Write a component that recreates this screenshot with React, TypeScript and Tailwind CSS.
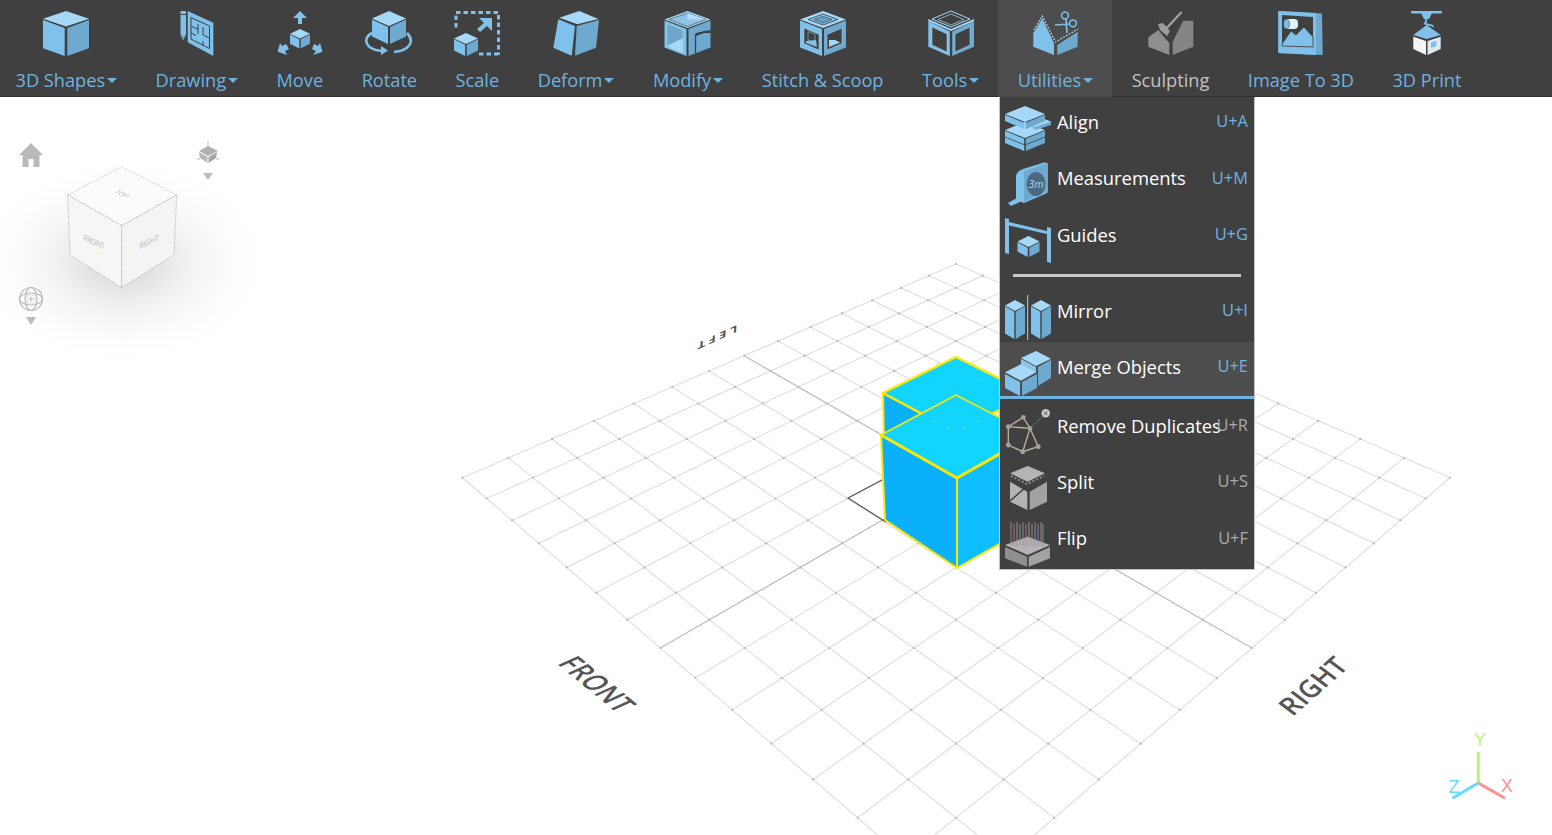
import type { ReactNode } from 'react';

const T = '#a6d8f7';
const L = '#7fc1ea';
const R = '#6ea9d0';
const D = '#404040';

type Pt = [number, number];
const pts = (p: number[]) => p.join(' ');

// isometric box: apex at (cx,y), half width hw, half height hh, side depth d
function Box({ cx, y, hw, hh, d, g = 1, c = [T, L, R] }: { cx: number; y: number; hw: number; hh: number; d: number; g?: number; c?: string[] }) {
  return (
    <>
      <polygon fill={c[0]} points={pts([cx, y, cx + hw, y + hh, cx, y + 2 * hh, cx - hw, y + hh])} />
      <polygon fill={c[1]} points={pts([cx - hw, y + hh + g, cx - g, y + 2 * hh + g, cx - g, y + 2 * hh + d, cx - hw, y + hh + d])} />
      <polygon fill={c[2]} points={pts([cx + hw, y + hh + g, cx + g, y + 2 * hh + g, cx + g, y + 2 * hh + d, cx + hw, y + hh + d])} />
    </>
  );
}

function Ico({ x, y = 8, s = 50, children }: { x: number; y?: number; s?: number; children: ReactNode }) {
  return (
    <svg width={s} height={s} viewBox={`${x} ${y} ${s} ${s}`} className="block shrink-0">
      {children}
    </svg>
  );
}

const headerIcons: Record<string, ReactNode> = {
  shapes: (
    <Ico x={41}>
      <Box cx={66} y={11} hw={23} hh={7.8} d={29.5} g={1.3} />
    </Ico>
  ),
  drawing: (
    <Ico x={172}>
      <rect x={180.5} y={11} width={5.5} height={24} rx={1} fill={L} />
      <polygon points="180.5,35 186,35 183.2,40.5" fill={R} />
      <rect x={180.5} y={14} width={5.5} height={1} fill={D} />
      <polygon points="187.7,11 213.3,22.7 213.3,56 187.7,42.3" fill={L} />
      <path d="M191 17.5 L209.5 26 V48.5 L191 39 Z M191 26 L198 29.5 V24 M198 29.5 V34 M203 27 V35 L209.5 38 M191 33 L196 35.5 M203 41 V46" fill="none" stroke={D} strokeWidth={1} />
    </Ico>
  ),
  move: (
    <Ico x={275}>
      <polygon points="300,11 307,18 302,18 302,24 298,24 298,18 293,18" fill={L} />
      <Box cx={300} y={29} hw={10} hh={4.8} d={10} g={0.7} />
      <polygon points="277.7,51.7 280,43 282,46 286,44 289,49 285,51 287,55" fill={L} />
      <polygon points="322.5,51.7 320,43 318,46 314,44 312,49 316,51 313,55" fill={L} />
    </Ico>
  ),
  rotate: (
    <Ico x={364}>
      <path d="M372 33 C363 38 365 47 376 50 L382 51 M394 52 C408 51 416 42 407 33" fill="none" stroke={L} strokeWidth={2.6} />
      <polygon points="388,50.5 381,46 381,55" fill={L} />
      <Box cx={389} y={11} hw={17} hh={7.5} d={18} g={1} />
    </Ico>
  ),
  scale: (
    <Ico x={452}>
      <path d="M456 12.5 H498.5 V55" fill="none" stroke={L} strokeWidth={3} strokeDasharray="4.5 3" />
      <path d="M456 15.5 V30 M479 54 H498" fill="none" stroke={L} strokeWidth={3} strokeDasharray="4.5 3" />
      <polygon points="492,18 492,31 487,26 480,32 477,29 484,23 479,18" fill={L} />
      <Box cx={466} y={33} hw={12} hh={5.5} d={12} g={0.8} />
    </Ico>
  ),
  deform: (
    <Ico x={551}>
      <polygon points="579.3,11 598.3,19 577.3,24.3 559.3,17.7" fill={T} />
      <polygon points="558.3,19.3 575,26 571.7,55.7 553.3,47.7" fill={L} />
      <polygon points="576.7,26 599,20 596,47.7 575,55.7" fill={R} />
    </Ico>
  ),
  modify: (
    <Ico x={664}>
      <Box cx={688.5} y={11} hw={23} hh={8.5} d={28} g={1} />
      <polygon points="688.5,13 707,19.5 688.5,26.5 670,19.5" fill="#8fc4e8" stroke={D} strokeWidth={0.6} />
      <polygon points="688.5,13 707,19.5 688.5,19.5" fill="#b4def8" />
      <path d="M668 23.5 L684 30 V53 L668 46 Z" fill="#6fa7cc" stroke="#a6d8f7" strokeWidth={0.5} />
      <path d="M668 46 L684 38 V53 Z" fill={T} />
      <path d="M697 36 L705 33 H711.7 V30 L697 33 Z" fill={D} />
      <path d="M696.5 53 V34.5 L707 31" fill="none" stroke={D} strokeWidth={1.3} />
    </Ico>
  ),
  stitch: (
    <Ico x={798}>
      <Box cx={823} y={11} hw={23} hh={8.5} d={28} g={1} />
      <polygon points="823,14 838,19.5 823,25 808,19.5" fill={L} stroke={D} strokeWidth={0.8} />
      <polygon points="823,16.5 832,19.5 823,23 814,19.5" fill="#62a0c8" stroke={D} strokeWidth={0.6} />
      <polygon points="804,28 819,34.5 819,50 804,43.5" fill={D} stroke={T} strokeWidth={0.5} />
      <polygon points="827,34.5 842,28 842,43.5 827,50" fill={D} stroke={T} strokeWidth={0.5} />
      <polygon points="806,41 816,40 817,47 806,43" fill={L} />
      <polygon points="829,40 835,40 840,42.5 829,47" fill={T} />
      <polygon points="808,31.5 815,34.5 815,43 808,40" fill="none" stroke={L} strokeWidth={0.6} />
    </Ico>
  ),
  tools: (
    <Ico x={926}>
      <polygon points="928.3,21 949.8,31.5 949.8,56 928.3,46.7" fill={L} />
      <polygon points="974,21 952.2,31.5 952.2,56 974,46.7" fill={R} />
      <polygon points="951,11 970,19 951,27 932,19" fill={D} stroke={T} strokeWidth={1} />
      <polygon points="951,14 964,19.5 951,25 938,19.5" fill="none" stroke={T} strokeWidth={0.7} />
      <path d="M928.3 21 L951 31 L974 21 L974 19 L951 29 L928.3 19 Z" fill={T} />
      <polygon points="932,27 947,34 947,52 932,45" fill={D} stroke="#a6d8f7" strokeWidth={0.5} />
      <polygon points="955,34 970,27 970,45 955,52" fill={D} stroke="#a6d8f7" strokeWidth={0.5} />
    </Ico>
  ),
  utilities: (
    <Ico x={1030}>
      <polygon points="1033.3,33.3 1042.3,18.3 1054,43.3 1054,55 1033.3,46.7" fill={L} />
      <polygon points="1057.3,45 1077.7,31.7 1077.7,46.7 1057.3,55" fill={R} />
      <path d="M1034 30 L1042.3 16 L1055.5 42 L1078 29" fill="none" stroke="#cfe9fb" strokeWidth={1.2} strokeDasharray="1.6 1.6" />
      <circle cx={1065} cy={15.5} r={3.4} fill="none" stroke={L} strokeWidth={1.5} />
      <circle cx={1073} cy={23.3} r={3.4} fill="none" stroke={L} strokeWidth={1.5} />
      <path d="M1066 19 L1067 33 M1070 24 L1055 25" stroke={L} strokeWidth={1.7} fill="none" />
    </Ico>
  ),
  sculpting: (
    <Ico x={1145}>
      <polygon points="1148.3,37.3 1158.3,30 1169.3,43.3 1169.3,55 1148.3,46.7" fill="#8f8f8f" />
      <polygon points="1172.7,41.7 1183.3,20.7 1193.3,20.7 1193.3,46.7 1172.7,55" fill="#858585" />
      <line x1={1165} y1={30} x2={1181.5} y2={12} stroke="#a3a3a3" strokeWidth={2.2} />
      <polygon points="1158,24 1163,23 1170,31 1167,36 1160,30" fill="#9b9b9b" />
    </Ico>
  ),
  image: (
    <Ico x={1276}>
      <polygon points="1278.3,11 1322,13.5 1322.7,55 1278.3,53" fill={R} />
      <polygon points="1278.3,11 1316,13 1316,55 1278.3,53" fill={L} />
      <polygon points="1282,15 1313,17 1313,47 1282,46" fill={D} />
      <path d="M1282 44 L1291 31 L1296 35 L1304 27 L1313 37 V47 L1282 46 Z" fill={L} stroke={D} strokeWidth={0.8} />
      <rect x={1285} y={19} width={13} height={10} rx={4} fill="#dff1fd" />
      <ellipse cx={1286.5} cy={24} rx={3} ry={5} fill={L} stroke={D} strokeWidth={0.6} />
    </Ico>
  ),
  print: (
    <Ico x={1402}>
      <rect x={1411} y={11} width={31} height={2.6} rx={1} fill={L} />
      <polygon points="1421,13 1432,13 1429,19 1424,19" fill={L} />
      <path d="M1426 19 V22 C1421 25 1434 24 1433 27" fill="none" stroke={L} strokeWidth={1.8} />
      <polygon points="1426.7,25 1440.7,35 1426.7,39 1413.3,35" fill={L} />
      <polygon points="1413.3,36.7 1426,41 1426,55 1413.3,49" fill="#f4f4f4" />
      <polygon points="1427.5,41 1440.7,36.7 1440.7,49 1427.5,55" fill="#dfe9f0" />
      <polygon points="1431,42.5 1436.5,40.5 1436.5,46 1431,48" fill={L} />
    </Ico>
  ),
};

const navItems = [
  { key: 'shapes', label: '3D Shapes', caret: true },
  { key: 'drawing', label: 'Drawing', caret: true },
  { key: 'move', label: 'Move' },
  { key: 'rotate', label: 'Rotate' },
  { key: 'scale', label: 'Scale' },
  { key: 'deform', label: 'Deform', caret: true },
  { key: 'modify', label: 'Modify', caret: true },
  { key: 'stitch', label: 'Stitch & Scoop' },
  { key: 'tools', label: 'Tools', caret: true },
  { key: 'utilities', label: 'Utilities', caret: true, active: true },
  { key: 'sculpting', label: 'Sculpting', muted: true },
  { key: 'image', label: 'Image To 3D' },
  { key: 'print', label: '3D Print' },
];

const G1 = '#b4b4b4';
const G2 = '#a2a2a2';
const G3 = '#8f8f8f';

const menuIcons: Record<string, ReactNode> = {
  align: (
    <Ico x={0} y={0} s={46}>
      <Box cx={20} y={16} hw={20} hh={8} d={13} g={0.8} />
      <path d="M0 31 L20 39 L40 31" fill="none" stroke={D} strokeWidth={0.8} />
      <polygon points="36,12 46,16 46,19 30,24 27,20" fill={R} />
      <polygon points="36,12 46,15.5 30,21 22,18" fill={T} />
      <Box cx={20} y={0} hw={20} hh={8} d={7} g={0.8} />
    </Ico>
  ),
  measure: (
    <Ico x={0} y={0} s={46}>
      <path d="M11 14 Q12 9 18 7 L39 0.5 Q43 0 43 4 L43 29 Q43 31 40 32 L19 41 L11 38 Z" fill={L} />
      <polygon points="19,9 43,1 43,29 19,40" fill={R} />
      <ellipse cx={31} cy={22} rx={9.5} ry={12} fill="#4b6a80" />
      <text x={31} y={26} fontSize={11} fontStyle="italic" textAnchor="middle" fontFamily="Open Sans, sans-serif" fill="#a6d8f7">3m</text>
      <polygon points="3,41 12,36 18,35 15,40 6,44" fill={L} />
    </Ico>
  ),
  guides: (
    <Ico x={0} y={0} s={46}>
      <polygon points="0,0 4,1 4,36 0,35" fill={L} />
      <polygon points="42,9 46,10 46,45 42,44" fill={L} />
      <polygon points="4,4 42,13 42,16 4,7.5" fill={L} />
      <Box cx={23.5} y={18} hw={11} hh={5.5} d={10} g={0.8} />
    </Ico>
  ),
  mirror: (
    <Ico x={0} y={0} s={46}>
      <Box cx={10} y={5} hw={10} hh={5.5} d={28} g={0.7} />
      <rect x={22} y={0} width={1.2} height={45} fill={L} />
      <Box cx={36} y={5} hw={10} hh={5.5} d={28} g={0.7} />
    </Ico>
  ),
  merge: (
    <Ico x={0} y={0} s={46}>
      <polygon points="31,0 46,7.7 31,15 16,7" fill={T} />
      <polygon points="16,8 31,16 31,22 16,14" fill="#8fc4e8" />
      <polygon points="33,16 46,8.7 46,27 33,35" fill={R} />
      <polygon points="0,21.3 16,13.3 31,21.3 16,29.7" fill={T} />
      <polygon points="0,23 15,31 15,45 0,37" fill={L} />
      <polygon points="17,31 32,23 32,37 17,45" fill={R} />
    </Ico>
  ),
  remove: (
    <Ico x={0} y={0} s={46}>
      <path d="M3.3 18.7 L18.3 9.3 L25 20.3 L33.3 38.7 L17.7 43.7 L3.3 37 Z M3.3 18.7 L25 20.3 L17.7 43.7" fill="none" stroke="#c2b29a" strokeWidth={1.3} />
      <path d="M25 20.3 L40.7 5.3" stroke="#8a8a8a" strokeWidth={1} strokeDasharray="1.5 1" />
      {([[3.3, 18.7], [18.3, 9.3], [25, 20.3], [33.3, 38.7], [17.7, 43.7], [3.3, 37]] as Pt[]).map(([x, y]) => (
        <circle key={x} cx={x} cy={y} r={2.4} fill={G2} />
      ))}
      <circle cx={40.7} cy={5.3} r={4.2} fill="#c9c9c9" />
      <path d="M39 3.6 L42.4 7 M42.4 3.6 L39 7" stroke="#555" strokeWidth={1} />
    </Ico>
  ),
  split: (
    <Ico x={0} y={0} s={46}>
      <polygon points="22.7,0 40,7.3 22.7,15.7 5,7.3" fill={G1} />
      <path d="M6 10 L22 18 L39 10" fill="none" stroke={G3} strokeWidth={2} strokeDasharray="2 2" />
      <polygon points="5,15.7 22.3,25.7 22.3,44 5,35.7" fill={G1} />
      <polygon points="24.7,25.7 42,15.7 42,35.7 24.7,44" fill={G2} />
      <line x1={5} y1={35} x2={21} y2={21} stroke={D} strokeWidth={1.6} />
    </Ico>
  ),
  flip: (
    <Ico x={0} y={0} s={46}>
      <polygon points="22.7,15.7 45,24 22.7,34 0,24" fill={G1} />
      <polygon points="0,26 22,35.7 22,45.7 0,37.3" fill={G3} />
      <polygon points="23.7,35.7 45,26 45,37.3 23.7,45.7" fill={G2} />
      {[6, 9, 12, 15, 18, 21, 24, 27, 30, 33, 36, 38].map((x, i) => (
        <line key={x} x1={x} y1={1 + (i % 2) * 2} x2={x} y2={24 + (i % 3)} stroke={['#b5897f', '#9a7fc4', '#c49a5a', '#6f9fd0'][i % 4]} strokeWidth={0.9} />
      ))}
    </Ico>
  ),
};

const menuRows = [
  { key: 'align', label: 'Align', short: 'U+A', row: 'h-[56px]', icon: 'mt-[9px]', text: 'mt-[12px]', sc: 'mt-[13px]' },
  { key: 'measure', label: 'Measurements', short: 'U+M', row: 'h-[56px]', icon: 'mt-[9px]', text: 'mt-[12px]', sc: 'mt-[14px]' },
  { key: 'guides', label: 'Guides', short: 'U+G', row: 'h-[56px]', icon: 'mt-[9px]', text: 'mt-[13px]', sc: 'mt-[14px]' },
];
const menuRows2 = [
  { key: 'mirror', label: 'Mirror', short: 'U+I', row: 'h-[56px]', icon: 'mt-[9px]', text: 'mt-[12px]', sc: 'mt-[13px]' },
  { key: 'merge', label: 'Merge Objects', short: 'U+E', row: 'h-[57px] bg-[#4d4d4d] border-b-[3px] border-[#6fb3e0]', icon: 'mt-[9px]', text: 'mt-[12px]', sc: 'mt-[13px]' },
  { key: 'remove', label: 'Remove Duplicates', short: 'U+R', row: 'h-[56px]', icon: 'mt-[9px]', text: 'mt-[14px] -mr-[6px]', sc: 'mt-[15px] text-[#ababab]' },
  { key: 'split', label: 'Split', short: 'U+S', row: 'h-[56px]', icon: 'mt-[11px]', text: 'mt-[14px]', sc: 'mt-[15px] text-[#ababab]' },
  { key: 'flip', label: 'Flip', short: 'U+F', row: 'h-[57px]', icon: 'mt-[10px]', text: 'mt-[14px]', sc: 'mt-[16px] text-[#ababab]' },
];

type Row = (typeof menuRows)[number];

function MenuRow({ item }: { item: Row }) {
  return (
    <div className={`flex items-start pl-[5px] pr-[6px] ${item.row}`}>
      <div className={item.icon}>{menuIcons[item.key]}</div>
      <span className={`ml-[6px] text-[18.4px] leading-[26px] text-white whitespace-nowrap ${item.text}`}>{item.label}</span>
      <span className={`ml-auto text-[16.4px] leading-[22px] text-[#6fb3e0] whitespace-nowrap ${item.sc}`}>{item.short}</span>
    </div>
  );
}

function UtilitiesMenu() {
  return (
    <div className="absolute left-[0.5px] top-[97px] z-20 w-[256px] h-[473px] bg-[#404040] border border-t-0 border-[#c4c4c4]">
      {menuRows.map((item) => (
        <MenuRow key={item.key} item={item} />
      ))}
      <div className="h-[21px] pt-[9px] px-[13px]">
        <div className="h-[3px] bg-[#c8c8c8]" />
      </div>
      {menuRows2.map((item) => (
        <MenuRow key={item.key} item={item} />
      ))}
    </div>
  );
}

function Header() {
  return (
    <header className="relative z-10 h-[97px] shrink-0 flex bg-[#404040] border-b border-[#2e2e2e]">
      <div className="flex -ml-[3.75px]">
        {navItems.map((item) => (
          <div
            key={item.key}
            className={`relative flex h-[97px] flex-col items-center pt-[8px] px-[19.25px] ${item.active ? 'bg-[#4d4d4d]' : ''} ${item.muted ? 'text-[#c2c2c2]' : 'text-[#6fb3e0]'}`}
          >
            <div className="flex h-[50px] w-[40px] justify-center">{headerIcons[item.key]}</div>
            <div className="mt-[9px] flex items-center text-[18.2px] leading-[26px] whitespace-nowrap">
              {item.label}
              {item.caret && <span className="ml-[2px] h-0 w-0 border-x-[5px] border-t-[5px] border-x-transparent border-t-current" />}
            </div>
            {item.active && <UtilitiesMenu />}
          </div>
        ))}
      </div>
    </header>
  );
}

// floor grid: a 14 x 14 plane seen in perspective, corners measured off the picture
const C00: Pt = [462.6, 477.7];
const C10: Pt = [956, 264];
const C11: Pt = [1450, 477.7];
const C01: Pt = [956, 902.5];

function makeProject() {
  const dx1 = C10[0] - C11[0];
  const dx2 = C01[0] - C11[0];
  const sx = C00[0] - C10[0] + C11[0] - C01[0];
  const dy1 = C10[1] - C11[1];
  const dy2 = C01[1] - C11[1];
  const sy = C00[1] - C10[1] + C11[1] - C01[1];
  const den = dx1 * dy2 - dx2 * dy1;
  const g = (sx * dy2 - dx2 * sy) / den;
  const h = (dx1 * sy - sx * dy1) / den;
  const a = C10[0] - C00[0] + g * C10[0];
  const b = C01[0] - C00[0] + h * C01[0];
  const d = C10[1] - C00[1] + g * C10[1];
  const e = C01[1] - C00[1] + h * C01[1];
  return (u: number, v: number): Pt => {
    const w = g * u + h * v + 1;
    return [(a * u + b * v + C00[0]) / w, (d * u + e * v + C00[1]) / w];
  };
}

function FloorGrid() {
  const p = makeProject();
  const idx = Array.from({ length: 15 }, (_, i) => i);
  const line = (s: Pt, t: Pt, key: string, stroke: string) => (
    <line key={key} x1={s[0]} y1={s[1]} x2={t[0]} y2={t[1]} stroke={stroke} strokeWidth={1.2} />
  );
  return (
    <g>
      {idx.map((i) => line(p(i / 14, 0), p(i / 14, 1), `u${i}`, i === 7 ? '#bdbdbd' : '#e0e0e0'))}
      {idx.map((i) => line(p(0, i / 14), p(1, i / 14), `v${i}`, i === 7 ? '#bdbdbd' : '#e0e0e0'))}
      {idx.flatMap((i) =>
        idx.map((j) => {
          const [x, y] = p(i / 14, j / 14);
          return <circle key={`${i}-${j}`} cx={x} cy={y} r={1.1} fill="#b8b8b8" />;
        }),
      )}
    </g>
  );
}

function Cubes() {
  return (
    <g strokeLinejoin="round">
      <path d="M848 498 L884 479 M848 498 L886 522" stroke="#555" strokeWidth={1.2} fill="none" />
      {/* back cube */}
      <polygon points="883,393 956,432 956,480 884,440" fill="#0bb0fb" stroke="#ffe600" strokeWidth={2} />
      <polygon points="956,357 1031,394 956,432 883,393" fill="#12d5ff" stroke="#ffe600" strokeWidth={2.5} />
      {/* front cube */}
      <polygon points="881,435 957,478 957,568 885,520" fill="#0bb0fb" stroke="#ffe600" strokeWidth={2} />
      <polygon points="957,478 1033,435 1033,525 957,568" fill="#0fbeff" stroke="#ffe600" strokeWidth={2} />
      <polygon points="956,395 1033,435 957,478 881,435" fill="#12d5ff" stroke="#ffe600" strokeWidth={1.5} />
      <path d="M881 435 L957 478 L1033 435" fill="none" stroke="#ffe600" strokeWidth={3} />
      {([[934, 421], [948, 428], [964, 428], [978, 421]] as Pt[]).map(([x, y]) => (
        <circle key={x} cx={x} cy={y} r={0.7} fill="#ffe600" />
      ))}
    </g>
  );
}

function ViewCube() {
  return (
    <g>
      <ellipse cx={122} cy={262} rx={150} ry={105} fill="url(#vcShadow)" />
      <polygon points="121.7,166.7 176.7,195 121.7,225.7 67.7,195" fill="#fbfbfb" stroke="#bdbdbd" strokeWidth={0.7} strokeDasharray="1.4 1" />
      <polygon points="67.7,195 121.7,225.7 121.7,287.7 70,255" fill="#f6f6f6" stroke="#a8a8a8" strokeWidth={0.7} strokeDasharray="1.4 1" />
      <polygon points="176.7,195 121.7,225.7 121.7,287.7 174,255" fill="#f4f4f4" stroke="#a8a8a8" strokeWidth={0.7} strokeDasharray="1.4 1" />
      <g fontFamily="Open Sans, sans-serif" fontSize={10} fill="#b5b5b5" textAnchor="middle">
        <text transform="matrix(0.6 0.3 -0.6 0.3 120 195)">TOP</text>
        <text transform="matrix(0.66 0.28 0 0.85 94 245)">FRONT</text>
        <text transform="matrix(0.66 -0.3 0 0.85 149 245)">RIGHT</text>
      </g>
      {/* home */}
      <path d="M31 143 L43 155 H39.5 V167 H33.5 V159 H28.5 V167 H22.5 V155 H19 Z" fill="#b9b9b9" />
      {/* view mode */}
      <path d="M208 141 V147 M197 160 L203 156 M219 160 L213 156" stroke="#b9b9b9" strokeWidth={1} />
      <polygon points="208,146 218,151 208,156 199,151" fill="#b0b0b0" />
      <polygon points="199,152 207.5,157 207.5,163 200,158" fill="#b9b9b9" />
      <polygon points="217,152 208.5,157 208.5,163 216,158" fill="#a8a8a8" />
      <polygon points="203,173 213,173 208,180" fill="#bcbcbc" />
      {/* globe */}
      <g fill="none" stroke="#bcbcbc" strokeWidth={1.2}>
        <circle cx={31} cy={299} r={11.5} />
        <ellipse cx={31} cy={299} rx={11.5} ry={6} />
        <ellipse cx={31} cy={299} rx={6} ry={11.5} />
        <rect x={27} y={295} width={8} height={8} strokeWidth={0.8} strokeDasharray="1.5 1" />
      </g>
      <path d="M31 296.5 V301.5 M28.5 299 H33.5" stroke="#bcbcbc" strokeWidth={1} />
      <polygon points="26,317 36,317 31,325" fill="#bcbcbc" />
    </g>
  );
}

function Axes() {
  return (
    <g>
      <line x1={1478.3} y1={752} x2={1478.3} y2={783} stroke="#b5f576" strokeWidth={3} />
      <line x1={1478.3} y1={783} x2={1505} y2={798.3} stroke="#ff8f8f" strokeWidth={3} />
      <line x1={1478.3} y1={783} x2={1452.3} y2={798.3} stroke="#66d9ff" strokeWidth={3} />
      <g fontFamily="Liberation Sans, sans-serif" fontSize={18} textAnchor="middle">
        <text x={1480} y={746} fill="#b5f576">Y</text>
        <text x={1507} y={792} fill="#ff8f8f">X</text>
        <text x={1454} y={793} fill="#66d9ff">Z</text>
      </g>
    </g>
  );
}

function Scene() {
  return (
    <svg className="absolute inset-0 h-full w-full" viewBox="0 97 1552 738">
      <defs>
        <radialGradient id="vcShadow">
          <stop offset="0%" stopColor="#d2d2d2" />
          <stop offset="35%" stopColor="#ececec" />
          <stop offset="100%" stopColor="#ffffff" stopOpacity={0} />
        </radialGradient>
      </defs>
      <ViewCube />
      <FloorGrid />
      <Cubes />
      <g fontFamily="Open Sans, sans-serif" fontSize={28} fill="#555" fontWeight={600} textAnchor="middle">
        <text transform="matrix(0.66 0.54 -1.0 0.45 587 688.5)">FRONT</text>
        <text transform="matrix(0.68 -0.6 0.8 0.6 1321 692)">RIGHT</text>
        <text transform="matrix(-1.1 0.5 0.05 -0.8 716 334.4)" fontSize={12} fontWeight={700} letterSpacing={3}>LEFT</text>
      </g>
      <Axes />
    </svg>
  );
}

export default function App() {
  return (
    <div className="flex h-screen w-screen flex-col overflow-hidden bg-white font-['Open_Sans',sans-serif]">
      <Header />
      <main className="relative flex-1">
        <Scene />
      </main>
    </div>
  );
}
